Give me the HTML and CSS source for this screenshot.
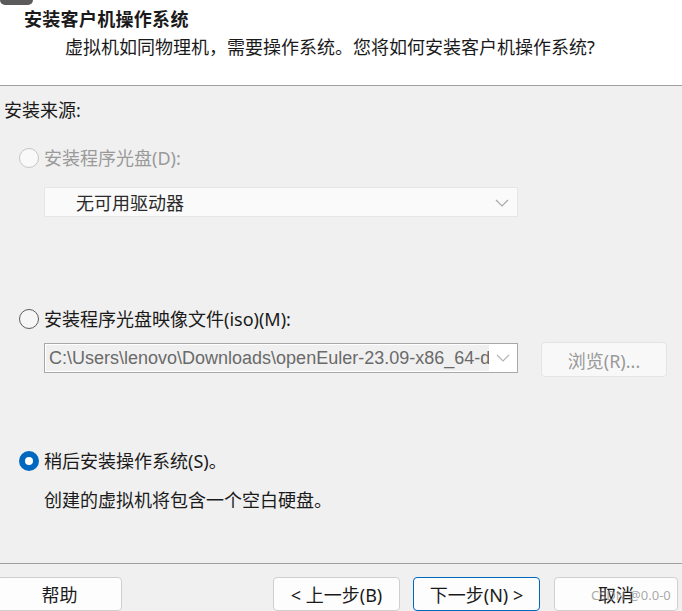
FILE: index.html
```html
<!DOCTYPE html>
<html lang="zh-CN">
<head>
    <meta charset="UTF-8">
    <title>新建虚拟机向导</title>
    <link rel="stylesheet" href="styles.css">
</head>
<body>
    <div class="header">
        <div class="corner"></div>
        <h1 class="title">安装客户机操作系统</h1>
        <p class="subtitle">虚拟机如同物理机，需要操作系统。您将如何安装客户机操作系统?</p>
    </div>

    <div class="content">
        <div class="section-label">安装来源:</div>

        <label class="option disabled first">
            <span class="radio"></span>
            <span>安装程序光盘(D):</span>
        </label>
        <div class="select select-disabled">
            <span class="select-text">无可用驱动器</span>
            <svg class="chevron" width="14" height="8" viewBox="0 0 14 8"><path d="M1 1 L7 7 L13 1" fill="none" stroke="#a8a8a8" stroke-width="1.2"/></svg>
        </div>

        <label class="option second">
            <span class="radio"></span>
            <span>安装程序光盘映像文件(iso)(M):</span>
        </label>
        <div class="iso-row">
            <div class="select select-combo">
                <span class="combo-text">C:\Users\lenovo\Downloads\openEuler-23.09-x86_64-dvd.iso</span>
                <span class="combo-arrow">
                    <svg width="14" height="8" viewBox="0 0 14 8"><path d="M1 1 L7 7 L13 1" fill="none" stroke="#b4b4b4" stroke-width="1.2"/></svg>
                </span>
            </div>
            <button class="browse" disabled>浏览(R)...</button>
        </div>

        <label class="option third">
            <span class="radio checked"></span>
            <span>稍后安装操作系统(S)。</span>
        </label>
        <p class="note">创建的虚拟机将包含一个空白硬盘。</p>
    </div>

    <div class="footer">
        <button class="btn help">帮助</button>
        <button class="btn">&lt; 上一步(B)</button>
        <button class="btn primary">下一步(N) &gt;</button>
        <button class="btn cancel">取消<span class="watermark">CSDN @0.0-0</span></button>
    </div>
</body>
</html>
```

FILE: styles.css
```css
* {
    margin: 0;
    padding: 0;
    box-sizing: border-box;
}

body {
    background-color: #f0f0f0;
    font-family: "Noto Sans", "Noto Sans CJK SC", sans-serif;
    font-size: 18px;
    color: #1a1a1a;
    height: 100vh;
    display: flex;
    flex-direction: column;
    overflow: hidden;
}

.header {
    background-color: white;
    height: 86px;
    border-bottom: 1px solid #a0a0a0;
}

.corner {
    width: 33px;
    height: 5px;
    background-color: #5b5b5b;
    border-radius: 0 0 5px 5px;
}

.title {
    margin-top: 2px;
    padding-left: 24px;
    font-size: 18px;
    line-height: 24px;
    font-weight: bold;
    letter-spacing: 0.3px;
}

.subtitle {
    margin-top: 4px;
    padding-left: 65px;
    line-height: 24px;
}

.content {
    padding-left: 4px;
}

.section-label {
    margin-top: 12px;
    line-height: 24px;
}

.option {
    display: flex;
    align-items: center;
    gap: 5px;
    margin-left: 15px;
    line-height: 24px;
}

.option.first {
    margin-top: 24px;
}

.option.second {
    margin-top: 90px;
}

.option.third {
    margin-top: 72px;
}

.option.disabled {
    color: #9a9a9a;
}

.radio {
    width: 20px;
    height: 20px;
    border-radius: 50%;
    border: 1px solid #5c5c5c;
    background-color: #f6f6f6;
    flex-shrink: 0;
}

.option.disabled .radio {
    border-color: #c6c6c6;
    background-color: #f9f9f9;
}

.radio.checked {
    border: 6px solid #0067c0;
    background-color: white;
}

.select {
    display: flex;
    align-items: center;
    margin-left: 40px;
    width: 474px;
    height: 30px;
}

.select-disabled {
    margin-top: 17px;
    background-color: #fafafa;
    border: 1px solid #e6e6e6;
    justify-content: space-between;
    padding: 0 8px 0 31px;
    color: #2a2a2a;
}

.chevron {
    margin-top: 2px;
}

.iso-row {
    display: flex;
    align-items: flex-start;
    margin-top: 11px;
}

.select-combo {
    margin-top: 1px;
    background-color: white;
    border: 1px solid #a8a8a8;
    padding: 1px;
}

.combo-text {
    flex: 1;
    height: 100%;
    background-color: #f0f0f0;
    color: #6a6a6a;
    font-family: "Liberation Sans", sans-serif;
    font-size: 18px;
    line-height: 26px;
    padding-left: 3px;
    white-space: nowrap;
    overflow: hidden;
}

.combo-arrow {
    width: 27px;
    display: flex;
    justify-content: center;
}

.browse {
    margin-left: 23px;
    width: 126px;
    height: 35px;
    background-color: #f8f8f8;
    border: 1px solid #e4e4e4;
    border-radius: 4px;
    font-family: inherit;
    font-size: 18px;
    color: #9a9a9a;
}

.note {
    margin-top: 15px;
    margin-left: 40px;
    line-height: 24px;
}

.footer {
    margin-top: auto;
    border-top: 1px solid #a0a0a0;
    padding-top: 13px;
    display: flex;
    gap: 13px;
}

.btn {
    width: 127px;
    height: 34px;
    background-color: #fdfdfd;
    border: 1px solid #cfcfcf;
    border-radius: 4px;
    font-family: inherit;
    font-size: 18px;
    color: #1a1a1a;
}

.btn.help {
    margin-left: -3px;
    width: 125px;
    margin-right: auto;
}

.btn.primary {
    border-color: #0067c0;
}

.btn.cancel {
    position: relative;
    margin-left: 1px;
    width: 124px;
    margin-right: 4px;
}

.watermark {
    position: absolute;
    left: 36px;
    top: 8px;
    font-size: 13px;
    color: rgba(140, 140, 140, 0.75);
    white-space: nowrap;
}
```
